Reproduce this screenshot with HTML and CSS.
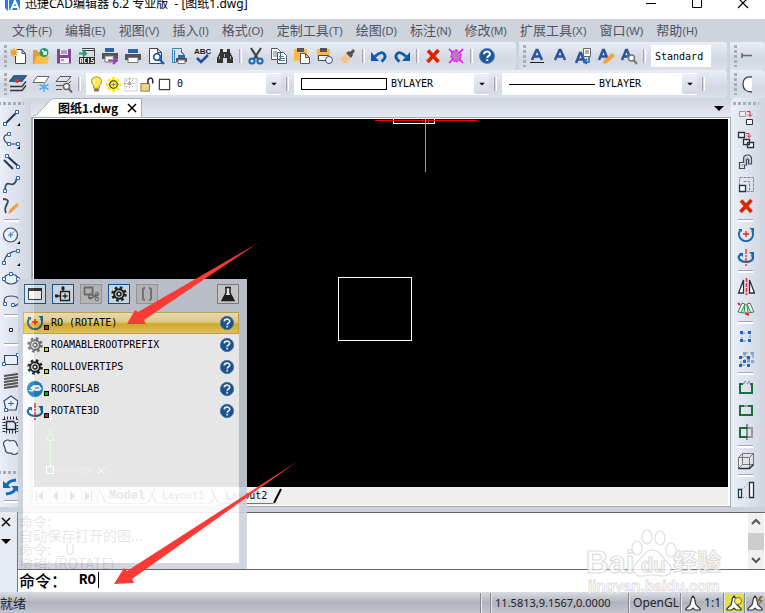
FILE: index.html
```html
<!DOCTYPE html>
<html lang="zh-CN">
<head>
<meta charset="utf-8">
<title>迅捷CAD编辑器</title>
<link rel="stylesheet" href="styles.css">
</head>
<body>
<svg class="sprite" aria-hidden="true">
  <symbol id="help" viewBox="0 0 18 18"><circle cx="9" cy="9" r="7.500" fill="#1f5a9c" stroke="#4d86bd"/><path d="M6 7.200C6 3.800 12 3.800 12 7C12 9 9.200 9 9.200 11M9.200 12.200V14" fill="none" stroke="#fff" stroke-width="2"/></symbol>
  <symbol id="gear" viewBox="0 0 18 18"><circle cx="9" cy="9" r="6.500" fill="none" stroke="currentColor" stroke-width="2.500" stroke-dasharray="2.600 2.505"/><circle cx="9" cy="9" r="4.800" fill="none" stroke="currentColor" stroke-width="2"/><circle cx="9" cy="9" r="2" fill="none" stroke="currentColor" stroke-width="1.500"/></symbol>
  <symbol id="rotate" viewBox="0 0 18 18"><path d="M3 4.500A7 7 0 1 0 15 4.500" fill="none" stroke="#1769a5" stroke-width="2"/><path d="M12.500 2H17v4.500zM1 3h4v3z" fill="#1769a5"/><path d="M9 5v6M6 8h6" stroke="#e22" stroke-width="1.300"/></symbol>
  <symbol id="rotate3d" viewBox="0 0 18 18"><path d="M4 6.500C-1 9 3 14 9 14S18 10 14.500 7" fill="none" stroke="#1769a5" stroke-width="2.200"/><path d="M12 4h5v5zM2 5h4v4z" fill="#1769a5"/><path d="M9 1v17" stroke="#e22" stroke-width="1.300" stroke-dasharray="5 1 2 1"/></symbol>
  <symbol id="cross" viewBox="0 0 18 18"><path d="M4 3.500L14.500 15M14.500 3L3.500 15" stroke="#d92800" stroke-width="3.600"/></symbol>
  <symbol id="down" viewBox="0 0 18 18"><path d="M5.500 7.500h7L9 11z" fill="#000"/></symbol>
  <symbol id="person" viewBox="0 0 18 18"><path d="M9 2q2 2 2 5l1 4 4 3.500v1.500h-5l-2-2-2 2H2v-1.500L6 11l1-4q0-3 2-5z" fill="#fff" stroke="#333" stroke-width="1.200"/></symbol>
</svg>
<div class="app">
  <header class="titlebar">
    <svg class="logo" viewBox="0 0 20 12"><path d="M2 0h3v11l-3-3zM6 0h11v10H6z" fill="#2a7ae0"/><path d="M8 10l4-9 4 9M9 7h6" fill="none" stroke="#fff" stroke-width="2"/></svg>
    <span class="title">迅捷CAD编辑器 6.2 专业版 &nbsp;- [图纸1.dwg]</span>
    <div class="winbtns">
      <button aria-label="最小化"><svg viewBox="0 0 12 12"><path d="M1 6.500h10" stroke="#000"/></svg></button>
      <button aria-label="最大化"><svg viewBox="0 0 12 12"><path d="M1.500 1.500h9v9h-9z" fill="none" stroke="#000"/></svg></button>
      <button aria-label="关闭"><svg viewBox="0 0 12 12"><path d="M1 1l10 10M11 1L1 11" stroke="#000" stroke-width="1.200"/></svg></button>
    </div>
  </header>
  <nav class="menu">
    <button>文件<small>(F)</small></button><button>编辑<small>(E)</small></button><button>视图<small>(V)</small></button><button>插入<small>(I)</small></button><button>格式<small>(O)</small></button><button>定制工具<small>(T)</small></button><button>绘图<small>(D)</small></button><button>标注<small>(N)</small></button><button>修改<small>(M)</small></button><button>扩展工具<small>(X)</small></button><button>窗口<small>(W)</small></button><button>帮助<small>(H)</small></button>
  </nav>

  <div class="row">
    <div class="bar bar-main">
      <i class="grip"></i>
      <button class="t" aria-label="新建"><svg viewBox="0 0 18 18"><path d="M8 2.500h5l3.500 4v10h-10V9M13 2.500v4h3" fill="#fff" stroke="#444"/><path d="M5 1v9M1 5.500h8M2 2.500l6 6M8 2.500l-6 6" stroke="#f1a02c" stroke-width="1.300"/></svg></button>
      <button class="t" aria-label="打开"><svg viewBox="0 0 18 18"><path d="M1 3h4l1 2h4v4H5l-2 8H1z" fill="#e79c35"/><path d="M5 9h12l-2 8H2z" fill="#ffbd4a"/><circle cx="12" cy="5.500" r="4.500" fill="#1f9d6b"/><path d="M10 3l4 4M14 4v3h-3" stroke="#fff" stroke-width="1.500" fill="none"/></svg></button>
      <button class="t" aria-label="保存"><svg viewBox="0 0 18 18"><path d="M2 2h14v14.500H2z" fill="#7b4a93"/><path d="M5 2h8v6H5zM5 11h9v5H5z" fill="#f2e8f6"/><path d="M6 4h6M6 6h6M6 13h3" stroke="#7b4a93"/></svg></button>
      <button class="t" aria-label="ACIS"><svg viewBox="0 0 18 18"><path d="M4 1.500h12.500v8M4 3.500h12" fill="none" stroke="#444"/><path d="M1 6.500h7M5 3.500l3 3-3 3" stroke="#26986a" stroke-width="2" fill="none"/><path d="M1 10h16v7H1z" fill="#333"/><path d="M2.500 16v-4.500h2V16M2.500 14h2M8.500 11.500h-2v4h2M10.500 11v5M15.500 11.500h-2v2h2v2h-3" fill="none" stroke="#fff" stroke-width=".9"/></svg></button>
      <button class="t" aria-label="输出"><svg viewBox="0 0 18 18"><path d="M4 1h9v4H4z" fill="#2967a8"/><path d="M1 6h16v6H1z" fill="#555"/><path d="M4 9h9v6H4z" fill="#fff" stroke="#777"/><path d="M7 13.500h9M12 10l4 3.500-4 3.500" fill="none" stroke="#8e45a4" stroke-width="2"/></svg></button>
      <button class="t" aria-label="打印"><svg viewBox="0 0 18 18"><path d="M4 2h10v4H4z" fill="#2967a8"/><path d="M1 7h16v6H1z" fill="#555"/><path d="M4 10.500h10v5H4z" fill="#fff" stroke="#777"/></svg></button>
      <button class="t" aria-label="打印预览"><svg viewBox="0 0 18 18"><path d="M2.500 1.500h8l4 4v11h-12zM10.500 1.500v4h4" fill="#fff" stroke="#444"/><circle cx="10" cy="10" r="3.300" fill="#fff" stroke="#1f5fae" stroke-width="1.800"/><path d="M12 12l5 5" stroke="#1f5fae" stroke-width="2.400"/></svg></button>
      <button class="t" aria-label="页面设置"><svg viewBox="0 0 18 18"><path d="M2.500 1.500h9v4M2.500 1.500v14h4M4.500 3v12" fill="none" stroke="#3b83b5"/><path d="M11 4l3 4" stroke="#444"/><path d="M8 8h7v3H8z" fill="#2967a8"/><path d="M6 11h11v4H6z" fill="#555"/><path d="M8 13h7v3.500H8z" fill="#fff" stroke="#777"/></svg></button>
      <button class="t" aria-label="拼写"><svg viewBox="0 0 18 18"><text x="1" y="7" class="abc">ABC</text><path d="M4 11l4 4 7-7" fill="none" stroke="#174f9e" stroke-width="2.500"/></svg></button>
      <button class="t" aria-label="查找"><svg viewBox="0 0 18 18"><path d="M4 2h3v3h4V2h3v3l3 6v5h-6v-5H7v5H1v-5l3-6z" fill="#333"/><path d="M3.500 12V9M14.500 12V9M8.500 7v3" stroke="#aaa"/></svg></button>
      <i class="sep"></i>
      <button class="t" aria-label="剪切"><svg viewBox="0 0 18 18"><path d="M4 1l7 11M14 1L7 12" stroke="#444" stroke-width="2.200"/><circle cx="5" cy="14" r="2.600" fill="none" stroke="#1769b5" stroke-width="2"/><circle cx="13" cy="14" r="2.600" fill="none" stroke="#1769b5" stroke-width="2"/></svg></button>
      <button class="t" aria-label="复制"><svg viewBox="0 0 18 18"><path d="M1.500 1.500h6l3 3v8h-9zM7.500 5.500h6l3 3v8h-9z" fill="#fff" stroke="#556"/><path d="M3 5h4M3 7h4M3 9h4M9 9.500h5M9 11.500h6M9 13.500h6" stroke="#4b86bb"/></svg></button>
      <button class="t" aria-label="粘贴"><svg viewBox="0 0 18 18"><path d="M1 2h13v12H1z" fill="#fdb945"/><path d="M4 1h7v4H4z" fill="#555"/><path d="M7.500 6.500h5l4 4v6h-9zM12.500 6.500v4h4" fill="#fff" stroke="#556"/></svg></button>
      <button class="t" aria-label="粘贴为块"><svg viewBox="0 0 18 18"><path d="M1 2h13v12H1z" fill="#fdb945"/><path d="M4 1h7v4H4z" fill="#555"/><path d="M2.500 8.500h10v5h-10z" fill="#eef3fa" stroke="#445"/><circle cx="13" cy="13" r="3.500" fill="#e4edf7" stroke="#456"/></svg></button>
      <button class="t" aria-label="特性匹配"><svg viewBox="0 0 18 18"><path d="M1 12l6-5 5 4-6 6z" fill="#f0c489"/><path d="M7 6l3-2 4 4-2 3zM11 5l3-3 2 2-3 4z" fill="#555"/></svg></button>
      <i class="sep"></i>
      <button class="t" aria-label="撤销"><svg viewBox="0 0 18 18"><path d="M5 9.500Q12 3 14.500 7.500Q16.500 11 11.500 14.500" fill="none" stroke="#0c59ae" stroke-width="2.800"/><path d="M1 5v9h8z" fill="#0c59ae"/></svg></button>
      <button class="t" aria-label="重做"><svg viewBox="0 0 18 18"><path d="M13 9.500Q6 3 3.500 7.500Q1.500 11 6.500 14.500" fill="none" stroke="#0c59ae" stroke-width="2.800"/><path d="M17 5v9H9z" fill="#0c59ae"/></svg></button>
      <i class="sep"></i>
      <button class="t" aria-label="删除"><svg><use href="#cross"/></svg></button>
      <button class="t" aria-label="清理"><svg viewBox="0 0 18 18"><path d="M2 2l14 14M16 2L2 16" stroke="#f0f" stroke-width="1.600"/><path d="M9 3l5 4-1 6-5 2-4-5 1-5z" fill="#b47bc0" stroke="#f0f" stroke-width="1.500" stroke-dasharray="2 1"/></svg></button>
      <i class="sep"></i>
      <button class="t" aria-label="帮助"><svg><use href="#help"/></svg></button>
    </div>
    <div class="bar bar-style">
      <i class="grip"></i>
      <button class="t" aria-label="文字"><svg viewBox="0 0 18 18"><path class="la" d="M4 13L8.500 3h1L14 13M6 9.500h6"/><path d="M2 15.500h14" stroke="#222"/></svg></button>
      <button class="t" aria-label="单行文字"><svg viewBox="0 0 18 18"><path class="la" d="M4 13L8.500 3h1L14 13M6 9.500h6"/></svg></button>
      <button class="t" aria-label="文字样式"><svg viewBox="0 0 18 18"><path class="la" d="M2 16L6 6h1l4 10M3.500 12.500h6"/><path d="M9.500 1.500h7v8h-7z" fill="#fff" stroke="#666"/><path d="M11 4h4M11 6h4" stroke="#666"/><path d="M15 10v5h-3m1-3l-3 3 3 2" fill="none" stroke="#1769b5" stroke-width="1.500"/></svg></button>
      <button class="t" aria-label="编辑文字"><svg viewBox="0 0 18 18"><path class="la" d="M2 13L6 3h1l4 10M3.500 9.500h6"/><path d="M6 17l1-4 8-7 3 3-8 7z" fill="#efa13b"/></svg></button>
      <button class="t" aria-label="查找文字"><svg viewBox="0 0 18 18"><path class="la" d="M2 13L6 3h1l4 10M3.500 9.500h6"/><circle cx="11.500" cy="11" r="3" fill="#fff" stroke="#777" stroke-width="1.500"/><path d="M13.500 13l3.500 4" stroke="#777" stroke-width="2"/></svg></button>
      <i class="sep"></i>
      <input class="stylebox" aria-label="文字样式名" value="Standard">
    </div>
    <div class="bar bar-end">
      <i class="grip"></i>
      <button class="t" aria-label="标注"><svg viewBox="0 0 18 18"><path d="M3 6v5M3 8.500h10" stroke="#666" stroke-width="1.500"/></svg></button>
    </div>
  </div>

  <div class="row row-props">
    <div class="bar bar-props">
      <i class="grip"></i>
      <button class="t" aria-label="图层"><svg viewBox="0 0 18 18"><path d="M5 1h12l-4 5H1zM1 11.500h12l4-5M1 15.500h12l4-5" fill="none" stroke="#333" stroke-width="1.300"/><path d="M5 1h12l-4 6H1z" fill="#2b6496"/><circle cx="8" cy="6" r="2" fill="#e32"/></svg></button>
      <button class="t" aria-label="冻结图层"><svg viewBox="0 0 18 18"><path d="M5 1.500h12l-4 6H1z" fill="#fff" stroke="#666"/><path d="M12 7v10M7.500 9.500l9 5M16.500 9.500l-9 5" stroke="#59aef0" stroke-width="1.500"/></svg></button>
      <button class="t" aria-label="查找图层"><svg viewBox="0 0 18 18"><path d="M5 1.500h11l-4 5H1zM1 10.500h7M1 14.500h6M12 10l4-4" fill="none" stroke="#555"/><circle cx="11.500" cy="11.500" r="3" fill="#fff" stroke="#666" stroke-width="1.500"/><path d="M13.500 13.500l3.500 4" stroke="#666" stroke-width="2"/></svg></button>
      <i class="sep"></i>
      <div class="combo">
        <svg class="g" viewBox="0 0 18 18"><path d="M9 1C2 1 3 8 6 10v3h6v-3C15 8 16 1 9 1z" fill="#ffe95a" stroke="#a48a16"/><path d="M6.500 13.500h5v3h-5z" fill="#777"/><path d="M7 4q-2 2 0 4" stroke="#fff" fill="none"/></svg>
        <svg class="g" viewBox="0 0 18 18"><path d="M9 1v16M1 9h16M3.500 3.500l11 11M14.500 3.500l-11 11" stroke="#ffee00" stroke-width="3"/><circle cx="9" cy="9" r="4" fill="#ff0" stroke="#333" stroke-width="1.200"/><path d="M9 7v4M7 9h4" stroke="#777"/></svg>
        <svg class="g" viewBox="0 0 18 18"><path d="M3 3h13v13H3z" fill="none" stroke="#ccc"/><path d="M8 2v12M2 8h12M4 4l8 8M12 4l-8 8" stroke="#999" stroke-dasharray="2 1"/></svg>
        <svg class="g" viewBox="0 0 18 18"><path d="M2 8h9v8H2z" fill="#ecd491" stroke="#89722f"/><path d="M9.500 8V4q3-4 5 0v4" fill="none" stroke="#224" stroke-width="1.600"/></svg>
        <svg class="g" viewBox="0 0 18 18"><path d="M3.500 3.500h11v11h-11z" fill="#fff" stroke="#000"/></svg>
        <select class="mono zero" aria-label="图层名"><option>0</option></select>
        <i class="dd"><svg><use href="#down"/></svg></i>
      </div>
      <i class="sep"></i>
      <div class="combo"><span class="swatch"></span><select class="mono" aria-label="颜色"><option>BYLAYER</option></select><i class="dd"><svg><use href="#down"/></svg></i></div>
      <i class="sep"></i>
      <div class="combo"><span class="linesample"></span><select class="mono" aria-label="线型"><option>BYLAYER</option></select><i class="dd"><svg><use href="#down"/></svg></i></div>
      <i class="sep"></i>
    </div>
    <div class="bar bar-end">
      <i class="grip"></i>
      <button class="t" aria-label="圆"><svg viewBox="0 0 18 18"><path d="M13 2Q4 1 4 9t9 8" fill="#fff" stroke="#345" stroke-width="1.300"/></svg></button>
    </div>
  </div>

  <main class="work">
    <div class="tools tools-left">
      <i class="hgrip"></i>
      <button class="t" aria-label="直线"><svg viewBox="0 0 18 18"><path d="M4 14L15 3" class="ln"/><path class="pt" d="M1.500 13.500h3v3h-3zM13.500 1.500h3v3h-3z"/><path d="M18 14v3h-3z"/></svg></button>
      <button class="t" aria-label="多段线"><svg viewBox="0 0 18 18"><path d="M7 3Q1 4 2 8t6 5h8" class="th"/><path class="pt" d="M5.500 1.500h3v3h-3zM5.500 11.500h3v3h-3zM14.500 11.500h3v3h-3z"/><path d="M18 15v3h-3z"/></svg></button>
      <button class="t" aria-label="双线"><svg viewBox="0 0 18 18"><path d="M5 3l11 10M2 7l9 9" class="ln"/><path class="pt" d="M3.500 1.500h3v3h-3zM14.500 12.500h3v3h-3z"/></svg></button>
      <button class="t" aria-label="样条曲线"><svg viewBox="0 0 18 18"><path d="M3 15Q3 7 8 9t7-6" class="th wide"/><path class="pt" d="M1.500 14.500h3v3h-3zM14.500 1.500h3v3h-3z"/></svg></button>
      <button class="t" aria-label="徒手画"><svg viewBox="0 0 18 18"><path d="M1 2Q8 2 5 7T4 16" class="th wide"/><path d="M6 17l2-5 7-6 2 2-7 7z" fill="#f0a03c"/></svg></button>
      <i class="hsep"></i>
      <button class="t" aria-label="圆"><svg viewBox="0 0 18 18"><circle cx="8.500" cy="9" r="7" class="th fill"/><path d="M8 9l6-5M6 9h5M8.500 6.500v5" stroke="#2a66ae" stroke-dasharray="2 1"/><path d="M18 15v3h-3z"/></svg></button>
      <button class="t" aria-label="圆弧"><svg viewBox="0 0 18 18"><path d="M2 15Q3 4 15 3" class="th"/><path class="pt" d="M.500 13.500h3v3h-3zM5.500 5.500h3v3h-3zM14.500 1.500h3v3h-3z"/><path d="M18 15v3h-3z"/></svg></button>
      <button class="t" aria-label="椭圆"><svg viewBox="0 0 18 18"><ellipse cx="9" cy="9" rx="7" ry="5" class="th fill"/><path class="pt" d="M.500 7.500h3v3h-3zM7.500 2.500h3v3h-3zM14.500 7.500h3v3h-3z"/></svg></button>
      <button class="t" aria-label="椭圆弧"><svg viewBox="0 0 18 18"><path d="M3 12Q0 4 9 4t8 6q-1 4-6 4" class="th"/><path class="pt" d="M1.500 10.500h3v3h-3zM9.500 11.500h3v3h-3z"/></svg></button>
      <i class="hsep"></i>
      <button class="t" aria-label="点"><svg viewBox="0 0 18 18"><path d="M7.500 7.500h3v3h-3z" fill="#fff" stroke="#223"/></svg></button>
      <i class="hsep"></i>
      <button class="t" aria-label="矩形"><svg viewBox="0 0 18 18"><path d="M2.500 5.500h13v9h-13z" class="th fill"/><path class="pt" d="M.500 12.500h3v3h-3zM14.500 3.500h3v3h-3z"/></svg></button>
      <button class="t" aria-label="云线"><svg viewBox="0 0 18 18"><path d="M2 4L16 2M2 7l14-2M2 10l14-2M2 13l14-2M2 16l14-2" fill="none" stroke="#555" stroke-width="1.800"/></svg></button>
      <button class="t" aria-label="多边形"><svg viewBox="0 0 18 18"><path d="M9 2l7 5-2 9H4L2 7z" class="th fill"/><path d="M6 9.500h6M9 7v5" stroke="#2a66ae"/><path class="pt" d="M2.500 14.500h3v3h-3z"/></svg></button>
      <button class="t" aria-label="填充"><svg viewBox="0 0 18 18"><path d="M2 2h14v14H2z" fill="none" stroke="#223" stroke-width="3" stroke-dasharray="1 2"/><path d="M4.500 5.500h7l2 2v6h-9z" fill="#dde7f5" stroke="#223" stroke-width="1.400"/></svg></button>
      <button class="t" aria-label="修订云线"><svg viewBox="0 0 18 18"><path d="M3 10Q0 5 3 3t5 0q6-2 7 4 4 3 1 8-4 3-7 0-6 1-6-5z" class="th fill"/></svg></button>
      <i class="hgrip second"></i>
      <button class="t" aria-label="重生成"><svg viewBox="0 0 18 18"><path d="M5 8Q5 3 14 2M13 10q0 5-9 6" fill="none" stroke="#1267b7" stroke-width="3"/><path d="M1 3v7h8zM17 15V8H9z" fill="#1267b7"/></svg></button>
      <i class="hsep"></i>
    </div>

    <section class="doc">
      <div class="doctabs">
        <svg class="slant" viewBox="0 0 20 18"><path d="M0 18Q3 18 6 14L17 2Q18 0 20 0V18z" fill="#fff"/><path d="M0 17.500Q3 17.500 6 14L17 2Q18 .500 20 .500" fill="none" stroke="#aaaeb9"/></svg>
        <div class="doctab"><span>图纸1.dwg</span><button aria-label="关闭图纸"><svg viewBox="0 0 10 10"><path d="M1 1l8 8M9 1L1 9" stroke="#000" stroke-width="1.500"/></svg></button></div>
        <button class="tablist" aria-label="图纸列表"><svg viewBox="0 0 10 6"><path d="M0 0h10L5 5z"/></svg></button>
      </div>
      <div class="sheet">
        <svg class="drawing" role="img" aria-label="绘图区">
          <g fill="none" shape-rendering="crispEdges">
            <path d="M304.500 158.500h73v63h-73zM359.500 0v4.500h41V0" stroke="#fff"/>
            <path d="M341 1.500h102" stroke="#f00"/><path d="M388.500 0v4M394.500 0v4" stroke="#b22"/>
            <path d="M391.500 0v53" stroke="#9b9b9b"/>
            <path d="M12.500 347.500h7v7h-7z" stroke="#fff"/>
            <path d="M16.500 347V321M13 321.500h7" stroke="#0f0"/><path d="M20 351.500h28" stroke="#f00"/>
          </g>
          <path d="M16.500 311l-3.500 10h7z" fill="none" stroke="#0f0"/><path d="M48 348v7l10-3.500z" fill="none" stroke="#f00"/>
          <path d="M64 348l7 7M71 348l-7 7M13.500 295l3 4 3-4M16.500 299v4" fill="none" stroke="#fff"/>
        </svg>
        <div class="layouts">
          <button class="nv" aria-label="首个"><svg viewBox="0 0 12 12"><path d="M2.500 1v10" stroke="#000"/><path d="M9 1v10L4 6z"/></svg></button>
          <button class="nv" aria-label="上一个"><svg viewBox="0 0 12 12"><path d="M8 1v10L3 6z"/></svg></button>
          <button class="nv" aria-label="下一个"><svg viewBox="0 0 12 12"><path d="M4 1v10l5-5z"/></svg></button>
          <button class="nv" aria-label="末个"><svg viewBox="0 0 12 12"><path d="M9.500 1v10" stroke="#000"/><path d="M3 1v10l5-5z"/></svg></button>
          <svg class="edge" viewBox="0 0 9 16"><path d="M1 1l7 14" stroke="#000"/></svg>
          <button class="lt model">Model</button>
          <svg class="edge" viewBox="0 0 9 16"><path d="M8 1L1 15M5 6l4 9" stroke="#000"/></svg>
          <button class="lt">Layout1</button>
          <svg class="edge" viewBox="0 0 9 16"><path d="M1 1l7 14M4 9l-3 6" stroke="#000"/></svg>
          <button class="lt">Layout2</button>
          <svg class="edge" viewBox="0 0 9 16"><path d="M8 1L1 15" stroke="#000" stroke-width="2"/></svg>
        </div>
      </div>
    </section>

    <div class="tools tools-right">
      <i class="hgrip"></i>
      <button class="t" aria-label="复制对象"><svg viewBox="0 0 18 18"><path d="M2.500 2.500h6v5h-6z" fill="#eee" stroke="#999"/><path d="M9.500 10.500h6v5h-6z" fill="#fff" stroke="#234"/><path d="M10 2.500h3v5m-2-2l2 2 2-2" fill="none" stroke="#e22"/></svg></button>
      <button class="t" aria-label="多重复制"><svg viewBox="0 0 18 18"><path d="M1.500 1.500h6v5h-6zM6.500 8.500h6v5h-6zM10.500 11.500h6v5h-6z" fill="#fff" stroke="#234" stroke-width="1.300"/><path d="M9 2.500h3v4m-2-2l2 2 2-2" fill="none" stroke="#e22"/></svg></button>
      <button class="t" aria-label="偏移"><svg viewBox="0 0 18 18"><path d="M2.500 15.500v-6h4V6q0-4 4-4t4 4v5h-3V7q-1-2-2 0v5h-2v3.500z" class="th"/><path d="M5 13.500v-2h3V6q2-3 4.500 0v4" fill="none" stroke="#aaa"/></svg></button>
      <button class="t" aria-label="缩放"><svg viewBox="0 0 18 18"><path d="M2.500 2.500h14v14h-14zM6.500 6.500h6v10" fill="none" stroke="#888" stroke-dasharray="3 1"/><path d="M2.500 10.500h6v6h-6z" fill="#fff" stroke="#234" stroke-width="1.300"/></svg></button>
      <button class="t" aria-label="删除对象"><svg><use href="#cross"/></svg></button>
      <i class="hsep"></i>
      <button class="t" aria-label="旋转"><svg><use href="#rotate"/></svg></button>
      <button class="t" aria-label="三维旋转"><svg><use href="#rotate3d"/></svg></button>
      <i class="hsep"></i>
      <button class="t" aria-label="镜像"><svg viewBox="0 0 18 18"><path d="M6.500 3v13h-5zM12.500 3v13h5z" fill="#fff" stroke="#234" stroke-width="1.300"/><path d="M9.500 1v17" stroke="#e22" stroke-width="1.500" stroke-dasharray="4 1"/></svg></button>
      <button class="t" aria-label="三维镜像"><svg viewBox="0 0 18 18"><path d="M1 13L5 4l3 1-1 9zM17 13L13 4l-3 1 1 9zM4 14l4-9M14 14l-4-9" fill="#e7f3ec" stroke="#318850"/><path d="M1 4l2 2M8 14l4 2" stroke="#e22" stroke-width="2"/></svg></button>
      <i class="hsep"></i>
      <button class="t" aria-label="阵列"><svg viewBox="0 0 18 18"><path d="M5 5h8v8H5z" fill="none" stroke="#888" stroke-dasharray="3 2"/><path d="M3 3h3v3H3zM11 3h3v3h-3zM3 11h3v3H3zM11 11h3v3h-3z" fill="#1769c5"/></svg></button>
      <button class="t" aria-label="三维阵列"><svg viewBox="0 0 18 18"><path d="M4 7h8v8H4zM8 3h8v9H8z" fill="none" stroke="#888" stroke-dasharray="3 2"/><path d="M6 2h3v3H6zM14 2h3v3h-3zM14 10h3v3h-3zM10 9h3v3h-3z" fill="#7da5d8"/><path d="M2 6h3v3H2zM10 6h3v3h-3zM2 14h3v3H2zM10 14h3v3h-3zM6 10h3v3H6z" fill="#1769c5"/></svg></button>
      <i class="hsep"></i>
      <button class="t" aria-label="打断"><svg viewBox="0 0 18 18"><path d="M6 5H3v9h12V5h-2" fill="none" stroke="#177237" stroke-width="2"/><path d="M6 5l3-3M10 5l3-3" stroke="#999" stroke-width="1.500"/></svg></button>
      <button class="t" aria-label="合并"><svg viewBox="0 0 18 18"><path d="M3 5h12v9H3z" fill="none" stroke="#177237" stroke-width="2"/><path d="M7 5h4" stroke="#999" stroke-width="2"/></svg></button>
      <button class="t" aria-label="修剪"><svg viewBox="0 0 18 18"><path d="M10 5H3v9h7" fill="none" stroke="#177237" stroke-width="2"/><path d="M10 5h5v9h-5" fill="none" stroke="#999" stroke-width="2"/><path d="M10 1v16" stroke="#333"/></svg></button>
      <i class="hsep"></i>
      <button class="t" aria-label="三维实体"><svg viewBox="0 0 18 18"><path d="M1.500 5.500h11v11h-11zM5.500 1.500h11v11h-11zM1.500 5.500l4-4M12.500 5.500l4-4M1.500 16.500l4-4M12.500 16.500l4-4" fill="none" stroke="#777"/><path d="M1.500 16.500h11l4-4" fill="none" stroke="#234" stroke-width="1.500"/></svg></button>
      <i class="hsep"></i>
      <button class="t" aria-label="拉长"><svg viewBox="0 0 18 18"><path d="M1.500 8.500h3v8h-3zM12.500 1.500h4v15h-4z" fill="#fff" stroke="#234" stroke-width="1.300"/><path d="M5 8l7-6M6 16.500h6" stroke="#888" stroke-dasharray="1 2"/></svg></button>
    </div>
  </main>

  <section class="command">
    <div class="cmdside">
      <button aria-label="关闭命令行"><svg viewBox="0 0 10 10"><path d="M1 1l8 8M9 1L1 9" stroke="#000" stroke-width="1.500"/></svg></button>
      <button aria-label="命令行选项"><svg viewBox="0 0 10 10"><path d="M0 3h10L5 8z"/></svg></button>
    </div>
    <div class="cmdbody">
      <div class="history">
        <div class="lines"><p>命令:</p><p>自动保存打开的图...</p><p>命令: &nbsp;_U</p><p>撤销: (ROTATE)</p></div>
        <div class="scroll"><svg viewBox="0 0 16 18"><path d="M4 11l4-4 4 4" fill="none" stroke="#555" stroke-width="2"/></svg><i class="thumb"></i><svg viewBox="0 0 16 18"><path d="M4 7l4 4 4-4" fill="none" stroke="#555" stroke-width="2"/></svg></div>
      </div>
      <div class="entry"><label for="cmd">命令：</label><input id="cmd" value="RO"></div>
    </div>
  </section>

  <footer class="status">
    <span class="ready">就绪</span>
    <span class="cell blank"></span>
    <span class="cell coords">11.5813,9.1567,0.0000</span>
    <span class="cell engine">OpenGL</span>
    <span class="cell scale"><svg><use href="#person"/></svg>1:1</span>
    <span class="cell icons"><svg class="lit"><use href="#person"/><circle cx="13" cy="7" r="3.500" fill="#ffef5c" stroke="#665"/></svg></span>
    <span class="cell icons"><svg viewBox="0 0 18 18"><use href="#person"/><path d="M14 2l-3 5h3l-2 5 5-6h-3l3-4z" fill="#8b6b35"/></svg></span>
  </footer>

  <div class="popup">
    <div class="popbar">
      <button class="on" aria-label="窗口"><svg viewBox="0 0 18 18"><path d="M2.500 3.500h13v11h-13z" fill="#fff" stroke="#333"/><path d="M2 3h14v3H2z" fill="#333"/></svg></button>
      <button class="on" aria-label="插入项"><svg viewBox="0 0 18 18"><path d="M6.500 6.500h9v9h-9zM11 8.500v5M8.500 11h5M9 1v5M1 11h5" fill="none" stroke="#222" stroke-width="1.300"/><path d="M7.500 2h3v3h-3zM1 9.500h3v3H1z" fill="#222"/></svg></button>
      <button class="off" aria-label="剪切项"><svg viewBox="0 0 18 18"><path d="M2.500 2.500h8v7h-8zM7 10v3h3" fill="none" stroke="#777" stroke-width="1.800"/><path d="M8 9l8 4M8 14l8-5" stroke="#777" stroke-width="1.500"/><circle cx="15" cy="9" r="1.800" fill="none" stroke="#777"/><circle cx="15" cy="14" r="1.800" fill="none" stroke="#777"/></svg></button>
      <button class="on" aria-label="设置"><svg class="dark"><use href="#gear"/></svg></button>
      <button class="off" aria-label="表达式"><svg viewBox="0 0 18 18"><path d="M7 3Q4 3 5 7v4q-1 4 2 4M11 3q3 0 2 4v4q1 4-2 4" fill="none" stroke="#777" stroke-width="1.800"/></svg></button>
      <button class="flask" aria-label="实验"><svg viewBox="0 0 18 18"><path d="M6 2.500h6M7 3v5l-4 7.500h12L11 8V3" fill="#fff" stroke="#222" stroke-width="1.500"/><path d="M6 10h6l3 6H3z" fill="#222"/></svg></button>
    </div>
    <ul class="suggest">
      <li class="sel"><svg><use href="#rotate"/></svg><i class="dot red"></i><span class="mono">RO (ROTATE)</span><svg class="q"><use href="#help"/></svg></li>
      <li><svg class="grey"><use href="#gear"/></svg><i class="dot yellow"></i><span class="mono">ROAMABLEROOTPREFIX</span><svg class="q"><use href="#help"/></svg></li>
      <li><svg class="dark"><use href="#gear"/></svg><i class="dot yellow"></i><span class="mono">ROLLOVERTIPS</span><svg class="q"><use href="#help"/></svg></li>
      <li><svg viewBox="0 0 18 18"><circle cx="9" cy="9" r="8" fill="#2689c9"/><path d="M2 10q4 3 7 0h7M4 8l4-3h5l3 4-3 2H8z" fill="#fff"/><path d="M9 8h4" stroke="#2689c9"/></svg><i class="dot green"></i><span class="mono">ROOFSLAB</span><svg class="q"><use href="#help"/></svg></li>
      <li><svg><use href="#rotate3d"/></svg><i class="dot red"></i><span class="mono">ROTATE3D</span><svg class="q"><use href="#help"/></svg></li>
    </ul>
  </div>

  <svg class="arrows" viewBox="0 0 200 350" aria-hidden="true">
    <path d="M158 3L44 80 46 84 27 84 35 70 38 72z" fill="#fb3a36"/>
    <path d="M198 221L32 339 34 343 14 344 24 328 27 331z" fill="#fb3a36"/>
  </svg>
  <svg class="mark" viewBox="0 0 150 70">
    <g fill="#fff" stroke="#d9d9d9" stroke-width="1.200">
      <ellipse cx="52" cy="26" rx="5" ry="7"/><ellipse cx="62" cy="15" rx="5" ry="7"/><ellipse cx="75" cy="16" rx="5" ry="7"/><ellipse cx="86" cy="28" rx="5" ry="7"/>
      <path d="M67 28C60 28 57 36 52 40C45 47 49 55 58 54Q67 52 76 54C86 55 89 46 82 40C77 36 75 28 67 28z"/>
      <text x="1" y="51" class="bai">Bai</text><text x="56" y="50" class="du">du</text><text x="88" y="49" class="jy">经验</text><text x="3" y="69" class="url">jingyan.baidu.com</text>
    </g>
  </svg>
</div>
</body>
</html>
```
FILE: styles.css
```css
* { box-sizing: border-box; }
body { margin: 0; font-family: "Noto Sans CJK SC", "Liberation Sans", sans-serif; font-size: 12px; color: #222; background: #cdd1dc; overflow: hidden; }
button, input, select { font: inherit; color: inherit; border: 0; padding: 0; margin: 0; background: none; border-radius: 0; outline: 0; }
svg { display: block; flex: none; }
p, ul { margin: 0; padding: 0; list-style: none; }
.sprite { position: absolute; width: 0; height: 0; }
.app { position: relative; display: flex; flex-direction: column; height: 100vh; overflow: hidden; }

.titlebar { display: flex; height: 19px; background: #fff; overflow: hidden; flex: none; }
.logo { width: 20px; height: 12px; margin-left: 3px; }
.title { margin-left: 2px; font-family: "Noto Sans", "Noto Sans CJK SC", sans-serif; line-height: 8px; color: #000; white-space: nowrap; }
.winbtns { margin-left: auto; display: flex; gap: 34px; padding-right: 16px; }
.winbtns button { width: 12px; height: 12px; margin-top: -3px; }
.winbtns svg { width: 12px; height: 12px; }

.menu { display: flex; height: 23px; flex: none; padding-left: 12px; gap: 13px; background: #cfd3dc; color: #4d5365; font-size: 13px; line-height: 22px; white-space: nowrap; }
.menu small { font-family: "Liberation Sans", sans-serif; font-size: 11px; }

.row { display: flex; height: 28px; flex: none; gap: 3px; background: #cdd2dd; }
.bar { display: flex; align-items: center; gap: 5px; height: 28px; padding-left: 4px; background: linear-gradient(#eaeef7, #d3d8e3 60%, #dce0ea); border-radius: 0 3px 3px 0; }
.bar-main { width: 516px; flex: none; }
.bar-style, .bar-props { flex: 1; min-width: 0; }
.bar-end { width: 35px; flex: none; overflow: hidden; }
.grip { flex: none; width: 3px; height: 22px; margin-right: -3px; background: repeating-linear-gradient(#a9adb8 0 3px, transparent 3px 5px); }
.sep { flex: none; width: 3px; height: 14px; border-left: 1px solid #a3a7b2; border-right: 1px solid #fff; }
.t { flex: none; width: 18px; height: 18px; }
.t svg, .popbar svg, .suggest svg { width: 18px; height: 18px; }
.abc { font: bold 8px "Liberation Sans", sans-serif; fill: #222; }
.la { fill: none; stroke: #2d559d; stroke-width: 2.5; }
.stylebox { width: 60px; height: 22px; padding-left: 4px; background: #fff; color: #000; font: 10px "DejaVu Sans Mono", monospace; }
.mono { font: 10px/14px "DejaVu Sans Mono", monospace; color: #000; white-space: nowrap; }
.combo { display: flex; align-items: center; flex: none; width: 195px; height: 22px; background: #fff; }
.combo select { flex: 1; min-width: 0; height: 20px; appearance: none; }
.g { width: 17px; height: 17px; }
.combo .g:first-child { margin-left: 2px; }
.combo .zero { margin-left: 4px; }
.dd { width: 15px; height: 20px; background: linear-gradient(#eceff6, #d3d8e3); display: flex; align-items: center; justify-content: center; pointer-events: none; }
.dd svg { width: 14px; height: 18px; }
.swatch { width: 86px; height: 12px; margin: 0 4px 0 7px; border: 1px solid #000; }
.linesample { width: 86px; height: 1px; margin: 0 4px 0 7px; background: #000; }

.work { display: flex; flex: 1; min-height: 0; background: #cdd1dc; }
.tools { display: flex; flex-direction: column; align-items: center; gap: 4px; flex: none; padding-top: 4px; overflow: hidden; background: linear-gradient(90deg, #eaeef8, #d0d5e0); }
.tools-left { width: 31px; padding-right: 9px; }
.tools-right { width: 34px; padding-right: 6px; border-left: 1px solid #eef0f6; border-radius: 4px 0 0 0; }
.hgrip { flex: none; width: 26px; height: 3px; background: repeating-linear-gradient(90deg, #a9adb8 0 3px, transparent 3px 5px); }
.hgrip.second { margin-top: 11px; }
.hsep { flex: none; width: 15px; height: 3px; border-top: 1px solid #a3a7b2; border-bottom: 2px solid #fff; }
.ln { fill: none; stroke: #26364f; stroke-width: 2; }
.th { fill: none; stroke: #3a4860; stroke-width: 1.2; }
.th.wide { stroke-width: 1.8; }
.th.fill { fill: #e9f0fa; }
.pt { fill: #fff; stroke: #2b66ae; }

.doc { display: flex; flex-direction: column; flex: 1; min-width: 0; }
.doctabs { display: flex; flex: none; height: 19px; padding-left: 2px; background: linear-gradient(#cfd4df, #e5e9f2); }
.slant { width: 20px; height: 19px; }
.doctab { display: flex; align-items: center; gap: 9px; height: 19px; padding: 0 4px 0 5px; border: 1px solid #aaaeb9; border-width: 1px 1px 0 0; border-radius: 0 2px 0 0; background: #fff; font-weight: bold; color: #000; white-space: nowrap; line-height: 16px; }
.doctab button, .doctab svg { width: 10px; height: 10px; }
.tablist { margin: 2px 7px 0 auto; }
.tablist svg { width: 10px; height: 6px; }
.sheet { display: flex; flex-direction: column; flex: 1; min-height: 0; border: 1px solid #a6a9b3; border-width: 1px 1px 1px 2px; padding: 1px 2px 1px 1px; background: #fff; }
.drawing { width: 100%; flex: 1; min-height: 0; background: #000; }
.layouts { display: flex; align-items: center; flex: none; height: 18px; background: #f0f0f0; }
.nv { width: 16px; height: 16px; border-right: 1px solid #aaa; border-bottom: 1px solid #aaa; }
.nv svg { width: 12px; height: 12px; }
.edge { width: 9px; height: 16px; }
.lt { height: 16px; padding: 0 6px; border-bottom: 1px solid #777; font: 10px/14px "DejaVu Sans Mono", monospace; color: #000; }
.model { padding: 0 2px; font: bold 12px/14px "Liberation Mono", monospace; }

.command { display: flex; flex: none; height: 85px; padding-top: 5px; background: #cdd1dc; }
.cmdside { display: flex; flex-direction: column; gap: 9px; width: 17px; flex: none; padding: 5px 0 0 1px; background: #e6eaf3; }
.cmdside svg { width: 10px; height: 10px; }
.cmdside button { width: 10px; height: 10px; }
.cmdbody { display: flex; flex-direction: column; flex: 1; min-width: 0; border-left: 1px solid #777; background: #fff; }
.history { display: flex; height: 58px; border: 1px solid #666; border-width: 1px 0; overflow: hidden; }
.lines { flex: 1; padding: 1px 0 0 1px; font-family: "Noto Sans CJK SC", sans-serif; font-size: 14px; line-height: 14px; color: #000; }
.scroll { display: flex; flex-direction: column; justify-content: space-between; width: 16px; margin-right: 1px; background: #f0f0f0; }
.scroll svg { width: 16px; height: 18px; }
.thumb { height: 17px; background: #cdcdcd; }
.entry { display: flex; align-items: center; height: 20px; padding-left: 1px; font: 500 16px "Noto Sans CJK SC", sans-serif; line-height: 18px; color: #000; }
.entry input { width: 20px; margin-left: 12px; height: 16px; border-right: 1px solid #000; font: bold 14px "Liberation Mono", monospace; }

.status { display: flex; align-items: center; flex: none; height: 21px; background: linear-gradient(#dadde3, #b0b3bc 50%, #c3c6cc); color: #1d2230; font-family: "Noto Sans", "Noto Sans CJK SC", sans-serif; white-space: nowrap; }
.ready { flex: 1; font-size: 13px; }
.cell { display: flex; align-items: center; height: 20px; padding: 0 4px; border-left: 1px solid #84878f; box-shadow: inset 1px 0 #e4e6ea; flex: none; }
.blank { width: 10px; padding: 0; }
.coords { width: 138px; font-size: 11px; }
.engine { padding-right: 1px; }
.scale { gap: 2px; padding: 0 2px 0 3px; }
.icons { padding: 0 1px; }
.status svg { width: 18px; height: 18px; }
.lit { background: #e2df4b; }

.popup { position: absolute; left: 18px; top: 279px; width: 229px; height: 290px; padding: 5px 8px 6px 5px; background: #ced2de; opacity: .9; }
.popbar { display: flex; gap: 6px; height: 28px; padding-left: 1px; }
.popbar button { width: 22px; height: 20px; border: 1px solid #a5a5a8; background: #c6c6c9; display: flex; align-items: center; justify-content: center; }
.popbar .on { border: 1px solid #155c99; background: #e2eaf3; }
.popbar .flask { margin-left: auto; border-color: #888; background: #dadada; }
.suggest { height: 251px; background: #fff; }
.suggest li { display: flex; align-items: center; height: 22px; padding: 0 4px 0 3px; }
.suggest .q { margin-left: auto; width: 16px; height: 16px; }
.suggest .sel { background: linear-gradient(#fff4cf, #f7df94 45%, #e9b92a 55%, #f5d878); outline: 1px solid #d5b152; outline-offset: -1px; }
.dot { width: 5px; height: 5px; border: 1px solid #000; margin: 8px 2px 0 0; }
.red { background: #e22; } .yellow { background: #ee0; } .green { background: #0c0; }
.dark { color: #222; } .grey { color: #777; }

.arrows { position: absolute; left: 100px; top: 240px; width: 200px; height: 350px; pointer-events: none; }
.mark { position: absolute; left: 585px; top: 522px; width: 150px; height: 70px; opacity: .85; overflow: visible; pointer-events: none; }
.bai { font: bold 31px "Liberation Sans", sans-serif; }
.du { font: bold 20px "Liberation Sans", sans-serif; }
.jy { font: bold 24px "Noto Sans CJK SC", sans-serif; }
.url { font: bold 15px "Liberation Sans", sans-serif; stroke-width: .8; }
```
